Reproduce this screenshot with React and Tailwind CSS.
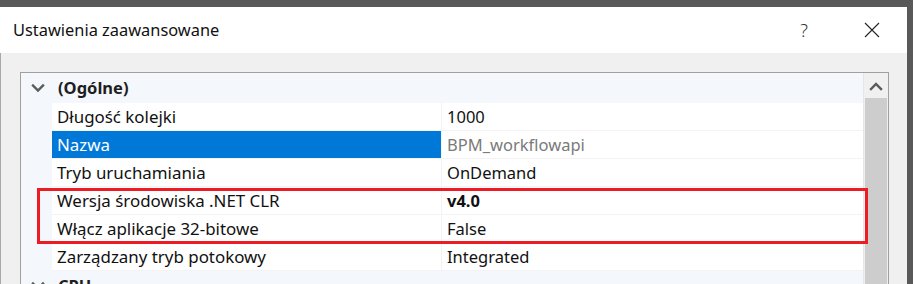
const rows = [
  { label: "Długość kolejki", value: "1000" },
  { label: "Nazwa", value: "BPM_workflowapi", selected: true },
  { label: "Tryb uruchamiania", value: "OnDemand" },
  { label: "Wersja środowiska .NET CLR", value: "v4.0", bold: true },
  { label: "Włącz aplikacje 32-bitowe", value: "False" },
  { label: "Zarządzany tryb potokowy", value: "Integrated" },
];

const Chevron = ({ up }) => (
  <svg className="w-[14px] h-[10px]" viewBox="0 0 14 10" fill="none">
    <path
      d={up ? "M2 8l5-5 5 5" : "M2 2.5l5 5 5-5"}
      stroke="#5a5a5a"
      strokeWidth={2.4}
      strokeLinecap="square"
    />
  </svg>
);

const Category = ({ name }) => (
  <div className="flex h-[30px] items-center bg-[#f4f7fc] shrink-0">
    <div className="w-[31px] flex justify-center pl-[2px]">
      <Chevron />
    </div>
    <span className="pl-[6px] font-bold text-[16.5px] text-[#1e1e1e]">{name}</span>
  </div>
);

export default function App() {
  return (
    <div
      className="relative w-[913px] h-[284px] overflow-hidden bg-[#595959] pt-[7px] pr-[6px] flex flex-col"
      style={{ fontFamily: '"Noto Sans", "Liberation Sans", sans-serif' }}
    >
      {/* Title bar */}
      <div className="h-[46px] bg-white flex items-center shrink-0">
        <span className="pl-[13px] text-[16.4px] text-[#111] flex-1">Ustawienia zaawansowane</span>
        <span className="text-[18px] text-[#333] mr-[56px] font-light">?</span>
        <svg className="w-[16px] h-[16px] mr-[27px]" viewBox="0 0 16 16">
          <path d="M1 1l14 14M15 1L1 15" stroke="#222" strokeWidth={1.1} />
        </svg>
      </div>

      {/* Body */}
      <div className="flex-1 bg-[#f0f0f0] border-l border-[#a8a8a8] pl-[19px] pt-[19px] pr-[18px]">
        <div className="flex h-full border border-[#a0a0a0] border-b-0 bg-white">
          <div className="flex-1 flex flex-col overflow-hidden">
            <Category name="(Ogólne)" />
            {rows.map((r) => (
              <div key={r.label} className="flex h-[28px] shrink-0 bg-[#f4f7fc]">
                <div className="w-[31px] shrink-0" />
                <div
                  className={`w-[389px] shrink-0 flex items-center pl-[5px] pt-[1px] text-[16.9px] border-b border-[#f3f3f3] ${
                    r.selected ? "bg-[#0078d7] text-white border-[#0078d7]" : "bg-white text-[#111]"
                  }`}
                >
                  {r.label}
                </div>
                <div
                  className={`flex-1 flex items-center pl-[5px] pt-[1px] text-[16.5px] bg-white border-l border-b border-[#f3f3f3] ${
                    r.selected ? "text-[#7a7a7a]" : "text-[#111]"
                  } ${r.bold ? "font-bold" : ""}`}
                >
                  {r.value}
                </div>
              </div>
            ))}
            <Category name="CPU" />
          </div>

          {/* Scrollbar */}
          <div className="w-[25px] bg-[#f0f0f0] flex flex-col shrink-0 border-l border-[#e6e6e6]">
            <div className="h-[25px] flex items-center justify-center">
              <Chevron up />
            </div>
            <div className="flex-1 mx-[1px] bg-[#cdcdcd]" />
          </div>
        </div>
      </div>

      {/* Red annotation */}
      <div className="absolute left-[37px] top-[188px] w-[831px] h-[56px] border-[3px] border-[#ed1c24]" />
    </div>
  );
}
